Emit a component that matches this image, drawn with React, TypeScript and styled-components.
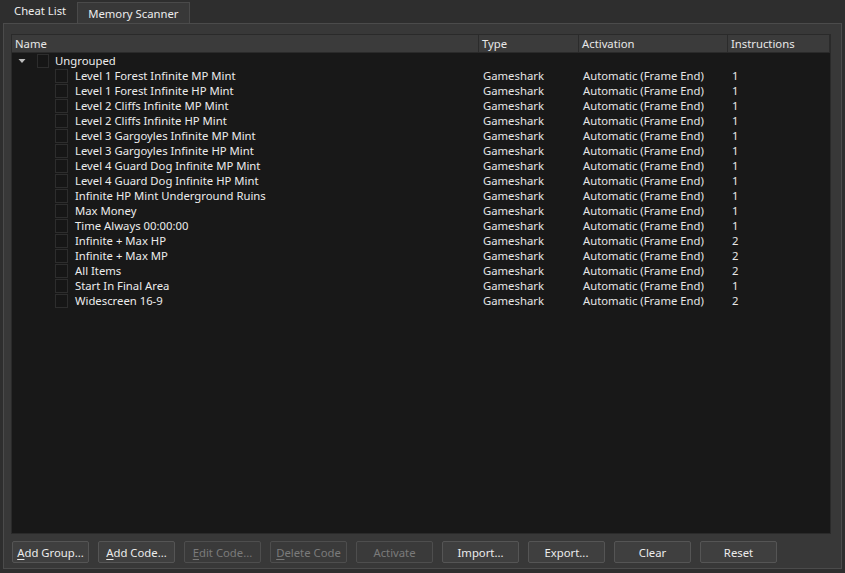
import React from "react";
import styled, { createGlobalStyle } from "styled-components";

const Global = createGlobalStyle`
  html, body { margin: 0; padding: 0; background: #2e2e2e; }
  body { font-family: "Segoe UI", "Noto Sans", "Open Sans", sans-serif; font-size: 11.3px; line-height: 15px; color: #e6e6e6; }
`;

const Window = styled.div`
  width: 845px;
  height: 573px;
  background: #2e2e2e;
  display: flex;
  flex-direction: column;
  box-sizing: border-box;
  padding: 0 3px 4px 3px;
`;

const TabBar = styled.div`
  display: flex;
  align-items: flex-end;
  height: 23px;
  flex: none;
`;

const Tab = styled.div<{ $active?: boolean }>`
  height: ${(p) => (p.$active ? 23 : 21)}px;
  box-sizing: border-box;
  padding: 0 10px;
  margin-left: ${(p) => (p.$active ? 0 : 0)}px;
  display: flex;
  align-items: center;
  color: #ececec;
  background: ${(p) => (p.$active ? "#2e2e2e" : "#383838")};
  border: 1px solid ${(p) => (p.$active ? "transparent" : "#4a4a4a")};
  border-bottom: none;
  padding-bottom: ${(p) => (p.$active ? 4 : 0)}px;
`;

const Panel = styled.div`
  flex: 1;
  display: flex;
  flex-direction: column;
  background: #383838;
  border: 1px solid #4b4b4b;
  box-sizing: border-box;
  padding: 10px 10px 5px 7px;
`;

const Tree = styled.div`
  flex: 1;
  display: flex;
  flex-direction: column;
  background: #181818;
  border: 1px solid #2a2a2a;
  min-height: 0;
`;

const Header = styled.div`
  display: grid;
  grid-template-columns: 467px 100px 149px 1fr;
  height: 17px;
  background: #3b3b3b;
  border-bottom: 1px solid #2a2a2a;
  flex: none;
`;

const HeaderCell = styled.div`
  display: flex;
  align-items: center;
  padding-left: 3px;
  color: #e8e8e8;
  border-right: 1px solid #2b2b2b;
`;

const Body = styled.div`
  flex: 1;
`;

const Row = styled.div`
  display: grid;
  grid-template-columns: 467px 100px 149px 1fr;
  height: 15px;
  align-items: center;
`;

const NameCell = styled.div<{ $level: number }>`
  display: flex;
  align-items: center;
  padding-left: ${(p) => (p.$level === 0 ? 6 : 43)}px;
  height: 15px;
`;

const Cell = styled.div`
  padding-left: 4px;
  white-space: nowrap;
`;

const Arrow = styled.svg`
  width: 8px;
  height: 6px;
  margin-right: 11px;
  flex: none;
`;

const Check = styled.span<{ $group?: boolean }>`
  width: ${(p) => (p.$group ? 12 : 13)}px;
  height: 14px;
  box-sizing: border-box;
  border: 1px solid #2d2d2d;
  background: #161616;
  margin-right: ${(p) => (p.$group ? 6 : 7)}px;
  flex: none;
`;

const Label = styled.span`
  white-space: nowrap;
  color: #ececec;
`;

const Buttons = styled.div`
  display: flex;
  gap: 9px;
  padding: 7px 0 0 1px;
  flex: none;
`;

const Button = styled.div<{ $disabled?: boolean }>`
  width: 77px;
  height: 22px;
  box-sizing: border-box;
  border: 1px solid ${(p) => (p.$disabled ? "#4e4e4e" : "#555")};
  background: ${(p) => (p.$disabled ? "#3a3a3a" : "#3f3f3f")};
  border-radius: 2px;
  display: flex;
  align-items: center;
  justify-content: center;
  color: ${(p) => (p.$disabled ? "#7a7a7a" : "#ececec")};
  white-space: nowrap;
  u { text-decoration: underline; text-underline-offset: 2px; }
`;

const cheats: [string, string][] = [
  ["Level 1 Forest Infinite MP Mint", "1"],
  ["Level 1 Forest Infinite HP Mint", "1"],
  ["Level 2 Cliffs Infinite MP Mint", "1"],
  ["Level 2 Cliffs Infinite HP Mint", "1"],
  ["Level 3 Gargoyles Infinite MP Mint", "1"],
  ["Level 3 Gargoyles Infinite HP Mint", "1"],
  ["Level 4 Guard Dog Infinite MP Mint", "1"],
  ["Level 4 Guard Dog Infinite HP Mint", "1"],
  ["Infinite HP Mint Underground Ruins", "1"],
  ["Max Money", "1"],
  ["Time Always 00:00:00", "1"],
  ["Infinite + Max HP", "2"],
  ["Infinite + Max MP", "2"],
  ["All Items", "2"],
  ["Start In Final Area", "1"],
  ["Widescreen 16-9", "2"],
];

const buttons: { pre: string; u: string; post: string; disabled?: boolean }[] = [
  { pre: "", u: "A", post: "dd Group..." },
  { pre: "", u: "A", post: "dd Code..." },
  { pre: "", u: "E", post: "dit Code...", disabled: true },
  { pre: "", u: "D", post: "elete Code", disabled: true },
  { pre: "Activate", u: "", post: "", disabled: true },
  { pre: "Import...", u: "", post: "" },
  { pre: "Export...", u: "", post: "" },
  { pre: "Clear", u: "", post: "" },
  { pre: "Reset", u: "", post: "" },
];

export default function App() {
  return (
    <>
      <Global />
      <Window>
        <TabBar>
          <Tab $active>Cheat List</Tab>
          <Tab>Memory Scanner</Tab>
        </TabBar>
        <Panel>
          <Tree>
            <Header>
              <HeaderCell>Name</HeaderCell>
              <HeaderCell>Type</HeaderCell>
              <HeaderCell>Activation</HeaderCell>
              <HeaderCell>Instructions</HeaderCell>
            </Header>
            <Body>
              <Row>
                <NameCell $level={0}>
                  <Arrow viewBox="0 0 8 6">
                    <path d="M0.5 1 L7.5 1 L4 5 Z" fill="#bdbdbd" />
                  </Arrow>
                  <Check $group />
                  <Label>Ungrouped</Label>
                </NameCell>
                <Cell />
                <Cell />
                <Cell />
              </Row>
              {cheats.map(([name, n]) => (
                <Row key={name}>
                  <NameCell $level={1}>
                    <Check />
                    <Label>{name}</Label>
                  </NameCell>
                  <Cell>Gameshark</Cell>
                  <Cell>Automatic (Frame End)</Cell>
                  <Cell>{n}</Cell>
                </Row>
              ))}
            </Body>
          </Tree>
          <Buttons>
            {buttons.map((b, i) => (
              <Button key={i} $disabled={b.disabled}>
                {b.pre}
                {b.u && <u>{b.u}</u>}
                {b.post}
              </Button>
            ))}
          </Buttons>
        </Panel>
      </Window>
    </>
  );
}
